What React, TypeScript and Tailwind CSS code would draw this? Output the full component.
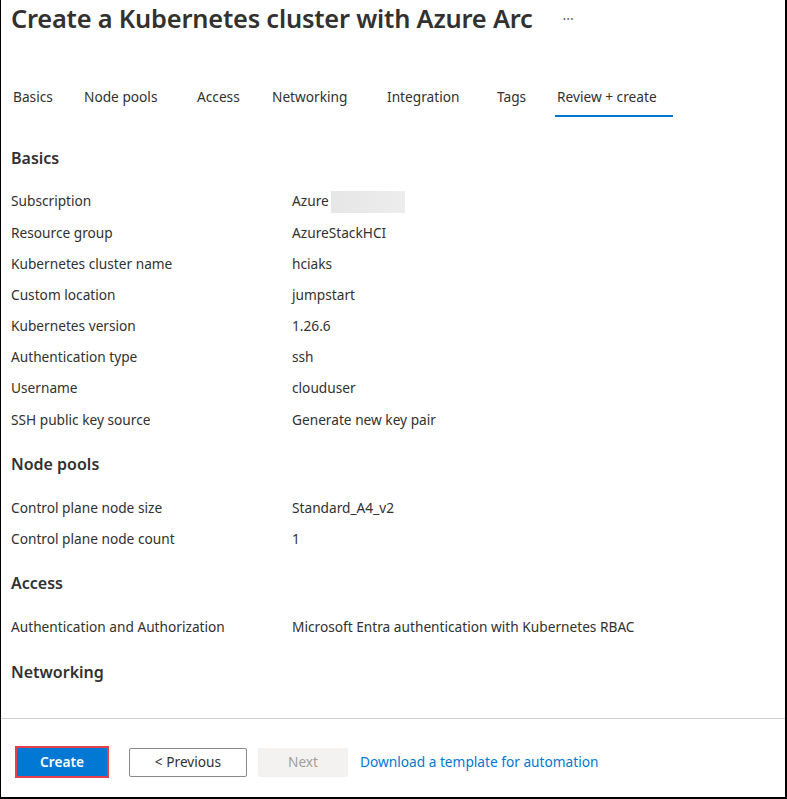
import React from 'react';

type Row = { label: string; value: React.ReactNode };

const tabs = [
    { name: 'Basics', w: 'w-[71px]' },
    { name: 'Node pools', w: 'w-[113px]' },
    { name: 'Access', w: 'w-[75px]' },
    { name: 'Networking', w: 'w-[115px]' },
    { name: 'Integration', w: 'w-[110px]' },
    { name: 'Tags', w: 'w-[60px]' },
    { name: 'Review + create', w: 'w-[118px]', active: true },
];

const sections: { title: string; rows: Row[] }[] = [
    {
        title: 'Basics',
        rows: [
            {
                label: 'Subscription',
                value: (
                    <span className="flex items-center">
                        Azure
                        <span className="ml-[2px] inline-block h-[22px] w-[74px] bg-gradient-to-r from-[#e6e6e6] to-[#ededed]" />
                    </span>
                ),
            },
            { label: 'Resource group', value: 'AzureStackHCI' },
            { label: 'Kubernetes cluster name', value: 'hciaks' },
            { label: 'Custom location', value: 'jumpstart' },
            { label: 'Kubernetes version', value: '1.26.6' },
            { label: 'Authentication type', value: 'ssh' },
            { label: 'Username', value: 'clouduser' },
            { label: 'SSH public key source', value: 'Generate new key pair' },
        ],
    },
    {
        title: 'Node pools',
        rows: [
            { label: 'Control plane node size', value: 'Standard_A4_v2' },
            { label: 'Control plane node count', value: '1' },
        ],
    },
    {
        title: 'Access',
        rows: [
            {
                label: 'Authentication and Authorization',
                value: 'Microsoft Entra authentication with Kubernetes RBAC',
            },
        ],
    },
    { title: 'Networking', rows: [] },
];

export default function App() {
    return (
        <div
            className="flex h-[799px] w-[787px] flex-col border-b-2 border-l border-r-2 border-black bg-white text-[#323130]"
            style={{ fontFamily: '"Segoe UI", "Noto Sans", sans-serif' }}
        >
            {/* Header */}
            <div className="flex h-[38px] items-center pl-[10px]">
                <h1 className="text-[25.4px] font-semibold leading-none tracking-[-0.2px]">
                    Create a Kubernetes cluster with Azure Arc
                </h1>
                <span className="ml-[30px] text-[14px] leading-none text-[#605e5c]">···</span>
            </div>

            {/* Tabs */}
            <div className="mt-[41px] flex h-[38px] pl-[10px] text-[13.7px]">
                {tabs.map((t) => (
                    <div
                        key={t.name}
                        className={`flex ${t.w} items-center border-b-2 pl-[2px] ${
                            t.active ? 'border-[#0078d4]' : 'border-transparent'
                        }`}
                    >
                        {t.name}
                    </div>
                ))}
            </div>

            {/* Summary */}
            <div className="mt-[12px] flex-1 pl-[10px] text-[13.7px]">
                {sections.map((s) => (
                    <div key={s.title}>
                        <div className="flex h-[57px] items-center text-[16px] font-semibold">{s.title}</div>
                        {s.rows.map((r) => (
                            <div key={r.label} className="flex h-[31.2px] items-center">
                                <div className="w-[281px]">{r.label}</div>
                                <div>{r.value}</div>
                            </div>
                        ))}
                    </div>
                ))}
            </div>

            {/* Footer */}
            <div className="flex items-center border-t border-[#d2d0ce] pb-[19px] pl-[14px] pt-[27px] text-[13.7px]">
                <button className="h-[32px] w-[94px] border-2 border-[#e5404a] bg-[#0078d4] font-semibold text-white">
                    Create
                </button>
                <button className="ml-[20px] h-[29px] w-[118px] rounded-[2px] border border-[#8a8886] bg-white">
                    &lt; Previous
                </button>
                <button className="ml-[11px] h-[29px] w-[90px] rounded-[2px] bg-[#f3f2f1] text-[#a19f9d]">
                    Next
                </button>
                <a href="#" className="ml-[12px] text-[#0078d4]">
                    Download a template for automation
                </a>
            </div>
        </div>
    );
}
